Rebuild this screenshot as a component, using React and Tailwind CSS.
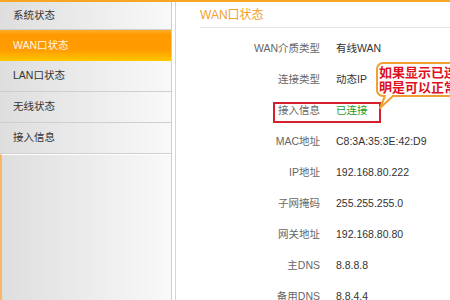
import React from "react";

const menu = ["系统状态", "WAN口状态", "LAN口状态", "无线状态", "接入信息"];

const rows = [
  ["WAN介质类型", "有线WAN"],
  ["连接类型", "动态IP"],
  ["接入信息", "已连接", true],
  ["MAC地址", "C8:3A:35:3E:42:D9"],
  ["IP地址", "192.168.80.222"],
  ["子网掩码", "255.255.255.0"],
  ["网关地址", "192.168.80.80"],
  ["主DNS", "8.8.8.8"],
  ["备用DNS", "8.8.4.4"],
];

export default function App() {
  return (
    <div
      className="relative w-[450px] h-[300px] overflow-hidden bg-white border-t-2 border-[#f5a623] flex text-[10.5px]"
      style={{ fontFamily: '"Liberation Sans", "Noto Sans CJK SC", sans-serif' }}
    >
      {/* Sidebar */}
      <div className="w-[172px] h-full flex flex-col border-r border-[#cfcfcf] bg-[linear-gradient(to_right,#dedede,#f9f9f9)]">
        {menu.map((m, i) => {
          const active = i === 1;
          return (
            <div
              key={m}
              className={
                (i === 0 ? "h-[28px] " : "h-[31px] ") +
                (active
                  ? "bg-[linear-gradient(to_bottom,#ffae2a,#ff9a00_15%,#ff9c00_65%,#ffc800)] text-[#fff6e6] "
                  : "border-b border-[#cfcfcf] text-[#333] ") +
                "flex items-center pl-[13px] shrink-0"
              }
            >
              {m}
            </div>
          );
        })}
        <div className="flex-1 border-l-2 border-[#f7b866] border-t border-t-white" />
      </div>

      {/* Main */}
      <div className="flex-1 h-full ml-[3px] border-l border-[#d4d4d4] flex flex-col">
        <div className="ml-[24px] h-[26px] shrink-0 flex items-center border-b border-[#e4e4e4] text-[#f0a030] text-[12px]">
          WAN口状态
        </div>
        <div className="mt-[5px] flex flex-col">
          {rows.map(([k, v, ok]) => (
            <div key={k} className="h-[31px] shrink-0 flex items-center">
              <div className="w-[144px] text-right text-[#666]">{k}</div>
              <div className={"ml-[16px] " + (ok ? "text-[#1f9a1f]" : "text-[#333]")}>{v}</div>
            </div>
          ))}
        </div>
      </div>

      {/* Red highlight box */}
      <div className="absolute left-[273px] top-[100px] w-[108px] h-[21px] border-2 border-[#d3222e]" />

      {/* Callout bubble */}
      <div className="absolute left-[376px] top-[60px] w-[130px] h-[35px] bg-white border-2 border-[#f0a030] rounded-[7px] pl-[1px] text-[#e0101e] font-bold text-[13px] leading-[15px] flex flex-col justify-center whitespace-nowrap">
        <div>如果显示已连接</div>
        <div>明是可以正常上网</div>
      </div>
      <svg className="absolute left-[376px] top-[90px]" width="24" height="20" viewBox="0 0 24 20">
        <path d="M9 4 L4 16 L17 4" fill="white" stroke="#f0a030" strokeWidth="2" strokeLinejoin="round" />
        <rect x="10" y="0" width="6" height="4" fill="white" />
      </svg>
    </div>
  );
}
